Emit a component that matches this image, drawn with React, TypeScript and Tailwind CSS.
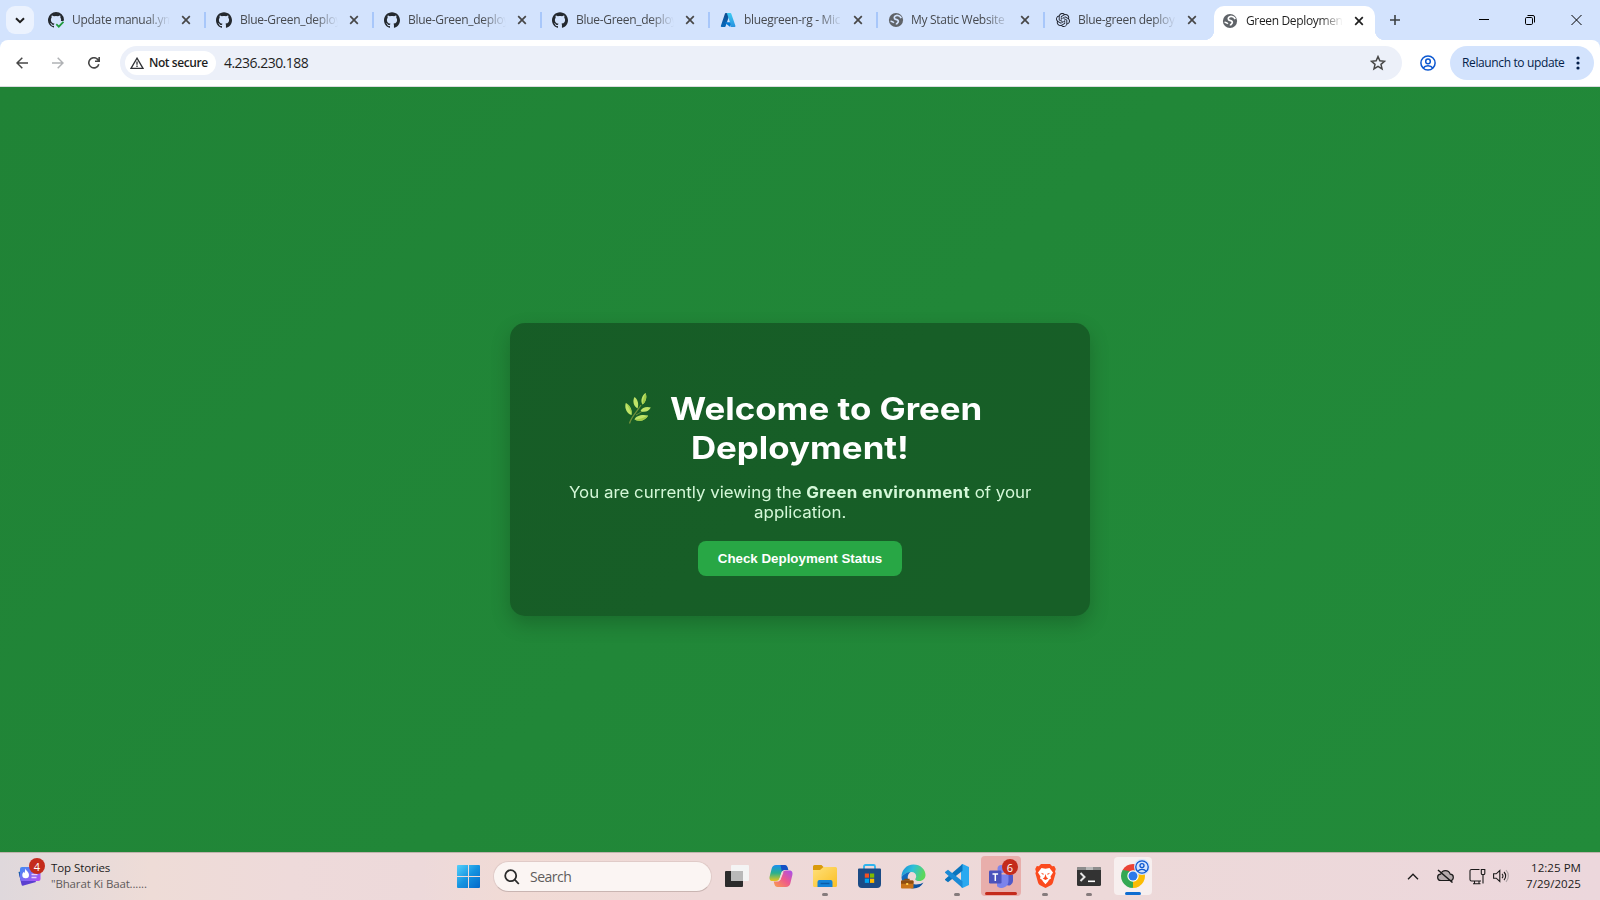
import type { ReactNode } from "react";
import { SiGithub, SiOpenai } from "react-icons/si";

const ui = "font-['Open_Sans','Noto_Sans',sans-serif]";

function CloseX({ color }: { color: string }) {
  return (
    <svg width="10" height="10" viewBox="0 0 10 10" fill="none" stroke={color} strokeWidth="1.7">
      <path d="M1.2 1.2 8.8 8.8M8.8 1.2 1.2 8.8" />
    </svg>
  );
}

function GithubMark() {
  return <SiGithub size={16} color="#24292f" />;
}

function GithubCheck() {
  return (
    <svg width="16" height="16" viewBox="0 0 16 16" fill="none">
      <path
        fill="#24292f"
        d="M8 0a8 8 0 0 0-2.5 15.6c.4.1.5-.2.5-.4v-1.4c-2 .4-2.6-.5-2.7-1-.1-.2-.5-.9-.8-1.1-.3-.2-.7-.5 0-.5.6 0 1.1.6 1.2.8.7 1.2 1.9.9 2.3.7.1-.5.3-.9.5-1.1-1.8-.2-3.6-.9-3.6-4 0-.8.3-1.6.8-2.1-.1-.2-.4-1 .1-2.1 0 0 .7-.2 2.2.8a7.5 7.5 0 0 1 4 0c1.5-1 2.2-.8 2.2-.8.4 1.1.2 1.9.1 2.1.5.6.8 1.3.8 2.1l-.2 1.4H15.4L16 8A8 8 0 0 0 8 0Z"
      />
      <path d="m8.3 12.2 2.500 2.500 4.600-4.900" stroke="#1f9a3d" strokeWidth="1.7" />
    </svg>
  );
}

function AzureMark() {
  return (
    <svg width="16" height="16" viewBox="0 0 16 16">
      <defs>
        <linearGradient id="azL" x1="0" y1="0" x2="0" y2="1">
          <stop offset="0" stopColor="#114a8b" />
          <stop offset="1" stopColor="#0669bc" />
        </linearGradient>
        <linearGradient id="azR" x1="0" y1="0" x2="0" y2="1">
          <stop offset="0" stopColor="#3ccbf4" />
          <stop offset="1" stopColor="#2892df" />
        </linearGradient>
      </defs>
      <path d="M5.8 1h4.3L5.6 14.3a.9.9 0 0 1-.8.6H1.700a.8.8 0 0 1-.8-1.100L5 1.600A.9.9 0 0 1 5.800 1Z" fill="url(#azL)" />
      <path d="M5.100 10.200h6.500l-1.400 4.700-5.300-4.200Z" fill="#0078d4" />
      <path d="M6.200 1h4.200c.4 0 .7.200.8.600l4.200 12.200a.8.8 0 0 1-.8 1.100h-4.300a.9.9 0 0 0 .8-1.100L7 1.600A.9.9 0 0 0 6.200 1Z" fill="url(#azR)" />
    </svg>
  );
}

function Globe({ land }: { land: string }) {
  return (
    <svg className="shrink-0" width="16" height="16" viewBox="0 0 16 16" fill="none">
      <circle cx="8" cy="8" r="7.100" fill="#5f6368" />
      <path
        d="M13.200 6.200C12.200 4 9.600 3 7.700 3.700 5.800 4.400 5.800 7 7.800 7.400c1.800.4 2.800.8 2.500 2.300-.3 1.500-1.500 1.400-2 2.900M2.600 9.200c1 .2 2.300.3 3.300 1.500"
        stroke={land}
        strokeWidth="1.700"
      />
    </svg>
  );
}

type TabProps = { icon: ReactNode; title: string; narrow?: boolean; last?: boolean };

function Tab({ icon, title, narrow, last }: TabProps) {
  return (
    <div
      className={`flex h-[16px] shrink-0 items-center border-r-2 pl-[10px] ${narrow ? "w-[167px]" : "w-[168px]"} ${last ? "border-transparent" : "border-[#a8c7fa]"}`}
    >
      <span className="flex w-[16px] shrink-0 justify-center">{icon}</span>
      <span
        className={`shrink-0 text-[12px] leading-[18px] tracking-[-0.300px] whitespace-nowrap text-[#474a4f] ${narrow ? "ml-[7px]" : "ml-[8px]"} w-[98px] [mask-image:linear-gradient(to_right,black_76%,transparent)]`}
      >
        {title}
      </span>
      <span className="ml-[11px] flex">
        <CloseX color="#474747" />
      </span>
    </div>
  );
}

function TabStrip() {
  return (
    <div className="flex h-[40px] items-start bg-[#d3e3fd]">
      <div className="mt-[6px] ml-[6px] flex size-[28px] shrink-0 items-center justify-center rounded-[9px] bg-[#ebf2fe]">
        <svg width="10" height="7" viewBox="0 0 10 7" fill="none" stroke="#1f1f1f" strokeWidth="2">
          <path d="M1 1.200 5 5.200 9 1.200" />
        </svg>
      </div>
      <div className="mt-[12px] mr-[2px] ml-[4px] flex shrink-0">
        <Tab icon={<GithubCheck />} title="Update manual.ym" />
        <Tab icon={<GithubMark />} title="Blue-Green_deploy" />
        <Tab icon={<GithubMark />} title="Blue-Green_deploy" />
        <Tab icon={<GithubMark />} title="Blue-Green_deploy" />
        <Tab icon={<AzureMark />} title="bluegreen-rg - Mic" />
        <Tab icon={<Globe land="#d3e3fd" />} title="My Static Website" narrow />
        <Tab icon={<SiOpenai size={14} color="#1b1f2a" />} title="Blue-green deploy" narrow last />
      </div>
      <div className="mt-[30px] -ml-[10px] size-[10px] shrink-0 bg-[radial-gradient(circle_at_0_0,#d3e3fd_10px,white_10.5px)]" />
      <div className="mt-[6px] flex h-[34px] w-[161px] shrink-0 items-center rounded-t-[10px] bg-white pb-[5px] pl-[8px]">
        <Globe land="#ffffff" />
        <span className="ml-[8px] w-[97px] shrink-0 text-[12px] leading-[18px] tracking-[-0.350px] whitespace-nowrap text-[#1f1f1f] [mask-image:linear-gradient(to_right,black_76%,transparent)]">
          Green Deploymen
        </span>
        <span className="ml-[11px] flex">
          <CloseX color="#1f1f1f" />
        </span>
      </div>
      <div className="mt-[30px] size-[10px] shrink-0 bg-[radial-gradient(circle_at_100%_0,#d3e3fd_10px,white_10.5px)]" />
      <svg className="mt-[15px] ml-[5px] shrink-0" width="10" height="10" viewBox="0 0 10 10" stroke="#3c4043" strokeWidth="1.600">
        <path d="M5 0v10M0 5h10" />
      </svg>
      <div className="mt-[14px] mr-[18px] ml-auto flex shrink-0 items-center gap-[36px] text-black">
        <svg width="10" height="12" viewBox="0 0 10 12" stroke="currentColor">
          <path d="M0 5.500h10" />
        </svg>
        <svg width="10" height="12" viewBox="0 0 10 12" stroke="currentColor" fill="none">
          <rect x=".5" y="3.500" width="7" height="7" rx="1.200" />
          <path d="M2.500 1.500H8A1.500 1.500 0 0 1 9.500 3v5.500" />
        </svg>
        <svg width="11" height="12" viewBox="0 0 11 12" stroke="currentColor">
          <path d="m.5 1 10 10M10.500 1 .5 11" />
        </svg>
      </div>
    </div>
  );
}

function PersonCircle({ size, color }: { size: number; color: string }) {
  return (
    <svg width={size} height={size} viewBox="0 0 16 16" fill="none" stroke={color} strokeWidth="1.500">
      <circle cx="8" cy="8" r="7.100" />
      <circle cx="8" cy="6.400" r="2.300" />
      <path d="M3.300 13c1-1.600 2.600-2.300 4.700-2.300s3.700.7 4.700 2.300" />
    </svg>
  );
}

function Toolbar() {
  return (
    <div className="bg-[#d3e3fd]">
      <div className="flex h-[47px] items-center rounded-t-[8px] border-b border-[#dadce0] bg-white pr-[6px] pl-[16px]">
        <svg width="12" height="12" viewBox="0 0 12 12" fill="none" stroke="#474747" strokeWidth="1.500">
          <path d="M12 6H1M6.300.7 1 6l5.300 5.300" />
        </svg>
        <svg className="ml-[24px]" width="12" height="12" viewBox="0 0 12 12" fill="none" stroke="#b0b2b5" strokeWidth="1.500">
          <path d="M0 6h11M5.700.7 11 6l-5.300 5.300" />
        </svg>
        <svg className="ml-[24px]" width="12" height="12" viewBox="0 0 12 12" fill="none" stroke="#474747" strokeWidth="1.600">
          <path d="M10.800 7.200A5.100 5.100 0 1 1 9.700 2.400L11 3.800M11.200 0v4.200H7" />
        </svg>
        <div className="ml-[20px] flex h-[34px] w-[1282px] items-center rounded-full bg-[#ecf0f9] pl-[5px]">
          <div className="flex h-[24px] w-[91px] items-center rounded-full bg-white pl-[5px]">
            <svg width="14" height="12" viewBox="0 0 14 12" fill="none" stroke="#303236" strokeWidth="1.300">
              <path d="M7 1.200 13 11.300H1Z" />
              <path d="M7 4.500v3.200M7 8.600v1.300" />
            </svg>
            <span className="ml-[5px] text-[12px] leading-[18px] font-semibold tracking-[-0.430px] whitespace-nowrap text-[#1f1f1f]">
              Not secure
            </span>
          </div>
          <span className="ml-[8px] text-[14px] leading-[20px] tracking-[-0.530px] text-[#1f1f1f]">4.236.230.188</span>
          <svg className="mr-[16px] ml-auto" width="16" height="16" viewBox="0 0 15 15" fill="none" stroke="#474747" strokeWidth="1.400">
            <path d="m7.500 1.500 1.750 4 4.300.4-3.250 2.850 1 4.250L7.500 10.750 3.700 13l1-4.250L1.450 5.900l4.300-.4Z" />
          </svg>
        </div>
        <span className="ml-[18px] flex">
          <PersonCircle size={16} color="#0b57d0" />
        </span>
        <div className="ml-auto flex h-[34px] w-[144px] items-center rounded-full bg-[#d3e3fd] pl-[12px] text-[#041e49]">
          <span className="w-[103px] text-[12px] leading-[18px] tracking-[-0.370px] whitespace-nowrap">Relaunch to update</span>
          <svg className="ml-[11px]" width="4" height="14" viewBox="0 0 4 14" fill="currentColor">
            <circle cx="2" cy="2" r="1.600" />
            <circle cx="2" cy="7" r="1.600" />
            <circle cx="2" cy="12" r="1.600" />
          </svg>
        </div>
      </div>
    </div>
  );
}

function Herb() {
  return (
    <svg width="26" height="31" viewBox="0 0 26 31">
      <path d="M4.500 30.500C6 24 12 19 16 12" stroke="#6f8f3c" strokeWidth="1.300" fill="none" />
      <path d="M11 22c4-2 6-4 9-5" stroke="#6f8f3c" strokeWidth="1" fill="none" />
      <g fill="#bfe468">
        <path d="M17.500 11.500C15 8 17 2.500 20.500 0c1.800 4 .5 9-3 11.500Z" />
        <path d="M12.500 15.500C9 13.500 7 8.500 9.500 4c3.500 2.500 4.500 7.500 3 11.500Z" />
        <path d="M6.500 22C1.500 20.500-.8 14.500.8 10c4 2 6.700 7 5.700 12Z" />
        <path d="M15.500 18c1.500-3.500 6-5 10.300-3.500-1.800 3.800-6.300 5.500-10.300 3.500Z" />
        <path d="M9.500 26.500C11 22.500 17 21 23 22.500c-2 4.800-8.500 6.700-13.500 4Z" />
      </g>
      <g fill="#9fcb48">
        <path d="M17.500 11.500C17.500 8 19 3.500 20.500 0c1.800 4 .5 9-3 11.500Z" />
        <path d="M6.500 22C5.500 17 3.500 14 .8 10c4 2 6.700 7 5.700 12Z" />
        <path d="M9.500 26.500c4 0 9-1.500 13.500-4-2 4.800-8.500 6.700-13.500 4Z" />
      </g>
    </svg>
  );
}

function Page() {
  return (
    <main className="flex h-[765px] items-center justify-center bg-[linear-gradient(135deg,#208336,#228b3a)] font-['Inter',sans-serif]">
      <div className="flex h-[293px] w-[580px] flex-col items-center rounded-[15px] bg-black/30 pt-[66px] shadow-[0_8px_20px_rgba(0,0,0,0.2)]">
        <h1 className="flex flex-col items-center text-[31px] leading-[39px] font-bold whitespace-nowrap text-white">
          <span className="flex h-[39px] w-[362px] items-center pl-[6px]">
            <Herb />
            <span className="ml-[19px] origin-left scale-x-[1.125]">Welcome to Green</span>
          </span>
          <span className="h-[39px] origin-center scale-x-[1.125]">Deployment!</span>
        </h1>
        <p className="mt-[16px] flex scale-x-[1.055] flex-col items-center text-[16px] leading-[19.500px] whitespace-nowrap text-[#d4f8d8]">
          <span>
            You are currently viewing the <strong className="font-bold tracking-[0.300px]">Green environment</strong> of your
          </span>
          <span>application.</span>
        </p>
        <button className="mt-[19px] h-[35px] w-[204px] rounded-[8px] bg-[#28a745] font-['Liberation_Sans',Arial,sans-serif] text-[13.330px] font-bold whitespace-nowrap text-white">
          Check Deployment Status
        </button>
      </div>
    </main>
  );
}

function WidgetIcon() {
  return (
    <svg width="23" height="22" viewBox="0 0 23 22">
      <defs>
        <linearGradient id="wg" x1="0" y1="0" x2="1" y2="1">
          <stop offset="0" stopColor="#3f8cf3" />
          <stop offset="1" stopColor="#b44df5" />
        </linearGradient>
      </defs>
      <path d="m1 9 2.500 10.500a1.500 1.500 0 0 0 2 1L18 17l-4-9Z" fill="#5b3fd0" />
      <path d="m.5 7 2 8 4-1-2-8Z" fill="#1b5fae" />
      <rect x="2" y="2" width="20.500" height="14" rx="2" fill="url(#wg)" />
      <path d="M7.500 3.500c.5 2.500 3.500 3.500 3.500 6.500A3.300 3.300 0 0 1 7.500 13.300 3.300 3.300 0 0 1 4.300 10c0-1.500.8-2.500 1.300-3l1 1C7 6.500 7 5 7.500 3.500Z" fill="#fff" />
      <path d="M13.500 9.500h6M13.500 12.500h5" stroke="#e6ccff" strokeWidth="1.300" />
    </svg>
  );
}

function StartIcon() {
  return (
    <svg width="23" height="23" viewBox="0 0 23 23">
      <defs>
        <linearGradient id="st" x1="0" y1="0" x2="23" y2="23" gradientUnits="userSpaceOnUse">
          <stop offset="0" stopColor="#54d0fb" />
          <stop offset=".5" stopColor="#1593e0" />
          <stop offset="1" stopColor="#0568c9" />
        </linearGradient>
      </defs>
      <path fill="url(#st)" d="M1 0h10v11H0V1a1 1 0 0 1 1-1ZM12 0h10a1 1 0 0 1 1 1v10H12ZM0 12h11v11H1a1 1 0 0 1-1-1ZM12 12h11v10a1 1 0 0 1-1 1H12Z" />
    </svg>
  );
}

function TaskViewIcon() {
  return (
    <svg width="24" height="22" viewBox="0 0 24 22">
      <rect x="0" y="6" width="18" height="16" rx="1" fill="#2b2b2b" />
      <rect x="6" y="0" width="18" height="16" rx="1" fill="#f4f4f4" />
      <rect x="6" y="6" width="12" height="10" fill="#b9b9b9" />
    </svg>
  );
}

function CopilotIcon() {
  return (
    <svg width="24" height="22" viewBox="0 0 24 22">
      <defs>
        <linearGradient id="cpA" x1="0" y1="0" x2="0" y2="1">
          <stop offset="0" stopColor="#1b8ff0" />
          <stop offset=".5" stopColor="#28b08e" />
          <stop offset="1" stopColor="#e8c51c" />
        </linearGradient>
        <linearGradient id="cpB" x1="1" y1="0" x2="0" y2="1">
          <stop offset="0" stopColor="#a44ff0" />
          <stop offset=".5" stopColor="#ef5a8a" />
          <stop offset="1" stopColor="#f9a04c" />
        </linearGradient>
      </defs>
      <path d="M7 0h8.500c1.800 0 2.500 1 3 2.500L19.300 5H16c-2 0-3 .8-3.600 2.800L10.700 13c-.6 2-1.700 3-3.700 3H3.500C.8 16 0 13.800.7 11.200l2-7.700C3.300 1.200 4.700 0 7 0Z" fill="url(#cpA)" />
      <path d="M11.500 0h4c1.800 0 2.500 1 3 2.500L19.300 5H16c-1.500 0-2.500.4-3.200 1.500Z" fill="#1650c4" />
      <path d="M17 22H8.500c-1.800 0-2.500-1-3-2.500L4.700 16.500H8c2 0 3-.8 3.600-2.800L13.300 8.500c.6-2 1.700-3 3.700-3h3.500c2.700 0 3.500 2.200 2.800 4.800l-2 8.200C20.700 20.800 19.300 22 17 22Z" fill="url(#cpB)" />
      <path d="m12.600 7.500 1.900-.3L11.400 15l-2.200.6c.8-.5 1.200-1.300 1.500-2.300Z" fill="#eedada" />
    </svg>
  );
}

function FolderIcon() {
  return (
    <svg width="24" height="22" viewBox="0 0 24 22">
      <defs>
        <linearGradient id="fo" x1="0" y1="0" x2="1" y2="1">
          <stop offset="0" stopColor="#ffe07a" />
          <stop offset="1" stopColor="#fbbf24" />
        </linearGradient>
      </defs>
      <path d="M0 1.500A1.500 1.500 0 0 1 1.500 0h7L11 2.500V6H0Z" fill="#d99a0b" />
      <path d="M0 5h7l3.500-3H22.500A1.500 1.500 0 0 1 24 3.500v17a1.500 1.500 0 0 1-1.500 1.500h-21A1.500 1.500 0 0 1 0 20.500Z" fill="url(#fo)" />
      <path d="M4.500 22v-5A2 2 0 0 1 6.500 15h11a2 2 0 0 1 2 2v5Z" fill="#1483d8" />
      <path d="M7.500 18.500h9" stroke="#0a5ca8" strokeWidth="1.500" />
    </svg>
  );
}

function StoreIcon() {
  return (
    <svg width="23" height="24" viewBox="0 0 23 24">
      <path d="M6 6V2.500A1.500 1.500 0 0 1 7.500 1h8A1.500 1.500 0 0 1 17 2.500V6" fill="none" stroke="#2fb4ee" strokeWidth="1.800" />
      <path d="M0 5.500A1 1 0 0 1 1 4.500h21a1 1 0 0 1 1 1V20a4 4 0 0 1-4 4H4a4 4 0 0 1-4-4Z" fill="#1b4b85" />
      <path d="M6.800 9.500h4.200v4.200H6.800Z" fill="#f25022" />
      <path d="M12 9.500h4.200v4.200H12Z" fill="#7fba00" />
      <path d="M6.800 14.700h4.200v4.200H6.800Z" fill="#00a4ef" />
      <path d="M12 14.700h4.200v4.200H12Z" fill="#ffb900" />
    </svg>
  );
}

function EdgeIcon() {
  return (
    <svg width="25" height="25" viewBox="0 0 25 25">
      <defs>
        <linearGradient id="edA" x1="0" y1="0" x2="1" y2=".3">
          <stop offset="0" stopColor="#1b8ad8" />
          <stop offset=".5" stopColor="#2fc0d8" />
          <stop offset="1" stopColor="#5bd75b" />
        </linearGradient>
        <linearGradient id="edB" x1="0" y1="0" x2="1" y2="1">
          <stop offset="0" stopColor="#1372c8" />
          <stop offset="1" stopColor="#0c4a94" />
        </linearGradient>
      </defs>
      <path d="M.5 13C.5 6 5.500.5 12.500.5c7 0 12 5 12 10.500 0 3.600-2.800 6-6 6-2.500 0-4.300-.8-4.300-1.800 0-.8 1-1.200 1-3 0-2.200-2-4.200-4.700-4.200C6 8 2.500 10 .5 13Z" fill="url(#edA)" />
      <path d="M.5 13C2.500 10 6 8 9.500 8c-2 1.500-2.800 3.500-2.800 5.500 0 4 4 7 8.300 7 3 0 5.500-1 7.500-2A12 12 0 0 1 12.500 24.500C6 24.500.5 19.500.5 13Z" fill="url(#edB)" />
      <path d="M4 17v-1.500h4V17" fill="none" stroke="#8a4b10" strokeWidth="1.300" />
      <rect x="0" y="16.500" width="12.500" height="8" rx="1" fill="#c9741a" />
      <path d="M0 17.500a1 1 0 0 1 1-1h10.500a1 1 0 0 1 1 1v2.300H0Z" fill="#8f4d12" />
      <rect x="5.200" y="19" width="2" height="2" fill="#ffd04a" />
    </svg>
  );
}

function VsCodeIcon() {
  return (
    <svg width="24" height="24" viewBox="0 0 24 24">
      <path d="M17.500 0 24 3v18l-6.500 3-1.500-1V1Z" fill="#2aa9f0" />
      <path d="M17.500 0v6.800L3 18.300 0 16v-.8Z" fill="#0a74bd" />
      <path d="M17.500 24v-6.800L3 5.700 0 8v.8Z" fill="#1a8ad6" />
    </svg>
  );
}

function TeamsIcon() {
  return (
    <svg width="24" height="23" viewBox="0 0 24 23">
      <circle cx="20" cy="6" r="3" fill="#5059c9" />
      <circle cx="12.500" cy="4" r="4" fill="#7b83eb" />
      <path d="M17 9.500h6a1 1 0 0 1 1 1v5.500a4.500 4.500 0 0 1-7 3.700Z" fill="#5059c9" />
      <path d="M8 9.500h10.500a1 1 0 0 1 1 1V16a7 7 0 0 1-11.500 5.300Z" fill="#7b83eb" />
      <rect x="0" y="5.500" width="12.500" height="13" rx="1.200" fill="#4b53bc" />
      <path d="M3.500 9h5.600M6.300 9v7" stroke="#fff" strokeWidth="1.500" />
    </svg>
  );
}

function BraveIcon() {
  return (
    <svg width="21" height="24" viewBox="0 0 21 24">
      <path d="M6 0h9l2.200 2.300 2-.3L20.800 5 20 7.500l.6 1.700-2.700 9.600c-.3 1-.8 1.600-1.600 2.100L10.500 24l-5.800-3.100c-.8-.5-1.300-1.100-1.600-2.100L.4 9.200 1 7.500.2 5 1.800 2l2 .3Z" fill="#fb4a1e" />
      <path d="m6.500 4 4 .8 4-.8 3.500 4.500-2.500 4 .5 2-2 1.200-1 1.800-2.500 2.800L8 17.500l-1-1.800-2-1.200.5-2L3 8.500Z" fill="#fff" />
      <path d="m5.800 8.700 3 1-.6 1.300ZM15.200 8.700l-3 1 .6 1.300ZM10.500 10l1 3.300 1.700 1.200-2.700 1.500-2.700-1.500 1.700-1.200Z" fill="#fb4a1e" />
    </svg>
  );
}

function TerminalIcon() {
  return (
    <svg width="24" height="19" viewBox="0 0 24 19">
      <rect width="24" height="19" rx="1.500" fill="#333" />
      <path d="M0 3V1.500A1.500 1.500 0 0 1 1.500 0h21A1.500 1.500 0 0 1 24 1.500V3Z" fill="#8c8c8c" />
      <path d="M9 0h7v3H9Z" fill="#b9b9b9" />
      <path d="m3.500 6 4 4-4 4" fill="none" stroke="#e6e6e6" strokeWidth="2" />
      <path d="M11 14.300h7" stroke="#fff" strokeWidth="1.600" />
    </svg>
  );
}

function ChromeIcon() {
  return (
    <svg width="24" height="24" viewBox="0 0 24 24">
      <path d="M12 12 1.610 6A12 12 0 0 1 22.390 6Z" fill="#ea4335" />
      <path d="M12 12 22.390 6A12 12 0 0 1 12 24Z" fill="#fbbc04" />
      <path d="M12 12 12 24A12 12 0 0 1 1.610 6Z" fill="#34a853" />
      <path d="M12 6.500h10.700L17 15l-5 9h-.5l5-9.500Z" fill="#fbbc04" />
      <path d="M1.610 6 7.200 14.700l4.800-2.700-4-5Z" fill="#34a853" />
      <circle cx="12" cy="12" r="5.700" fill="#fff" />
      <circle cx="12" cy="12" r="4.500" fill="#2b79ea" />
    </svg>
  );
}

function TaskSlot({ children, running }: { children: ReactNode; running?: boolean }) {
  return (
    <div className="relative flex h-[48px] w-[44px] shrink-0 items-center justify-center">
      {children}
      {running && <span className="absolute bottom-[4px] h-[3px] w-[6px] rounded-full bg-[#857b7c]" />}
    </div>
  );
}

function Taskbar() {
  return (
    <footer className="flex h-[48px] bg-[linear-gradient(to_right,#dfd8dc_0px,#eedcd7_150px,#eedada_290px,#edd9da_420px,#f1dbd5_520px,#eed9d8_700px,#edd9d9_1100px,#ecd7dc_1600px)] shadow-[inset_0_1px_0_#bfb3ad]">
      <div className="flex w-[446px] shrink-0 pl-[18px]">
        <div className="relative flex h-[48px] w-[33px] items-start pt-[13px]">
          <WidgetIcon />
          <span className="absolute top-[6px] left-[11px] flex size-[16px] items-center justify-center rounded-full bg-[#c42b1c] text-[11px] leading-none text-white">
            4
          </span>
        </div>
        <div className="flex flex-col pt-[8px] text-[11.500px] leading-[16px] whitespace-nowrap">
          <span className="tracking-[-0.080px] text-[#1b1a1a]">Top Stories</span>
          <span className="tracking-[-0.150px] text-[#5f5a5b]">"Bharat Ki Baat......</span>
        </div>
      </div>
      <TaskSlot>
        <StartIcon />
      </TaskSlot>
      <div className="mt-[9px] mr-[3px] ml-[3px] flex h-[31px] w-[219px] shrink-0 items-center rounded-full border border-[#e0cbc8] border-b-[#c9b5b2] bg-[#fbf5f3] pl-[10px]">
        <svg width="16" height="16" viewBox="0 0 16 16" fill="none" stroke="#2b2b2b" strokeWidth="1.800">
          <circle cx="6.700" cy="6.700" r="5.500" />
          <path d="m10.700 10.700 4.100 4.300" />
        </svg>
        <span className="ml-[10px] text-[14px] leading-[20px] tracking-[-0.500px] text-[#605c5b]">Search</span>
      </div>
      <TaskSlot>
        <TaskViewIcon />
      </TaskSlot>
      <TaskSlot>
        <CopilotIcon />
      </TaskSlot>
      <TaskSlot running>
        <FolderIcon />
      </TaskSlot>
      <TaskSlot>
        <StoreIcon />
      </TaskSlot>
      <TaskSlot>
        <EdgeIcon />
      </TaskSlot>
      <TaskSlot running>
        <VsCodeIcon />
      </TaskSlot>
      <TaskSlot>
        <div className="relative flex size-[40px] items-center justify-center rounded-[4px] bg-[#e8aeab]">
          <TeamsIcon />
          <span className="absolute top-[3px] right-[3px] flex size-[16px] items-center justify-center rounded-full bg-[#c42b1c] text-[11px] leading-none text-white">
            6
          </span>
          <span className="absolute bottom-px h-[3px] w-[32px] rounded-full bg-[#c42b1c]" />
        </div>
      </TaskSlot>
      <TaskSlot running>
        <BraveIcon />
      </TaskSlot>
      <TaskSlot running>
        <TerminalIcon />
      </TaskSlot>
      <TaskSlot>
        <div className="relative flex size-[38px] items-center justify-center rounded-[4px] bg-[#f7efef]">
          <ChromeIcon />
          <span className="absolute top-[2px] right-[2px] flex size-[16px] items-center justify-center rounded-full bg-[#d3e3fd]">
            <PersonCircle size={14} color="#0b57d0" />
          </span>
          <span className="absolute bottom-0 h-[3px] w-[16px] rounded-full bg-[#0f6cd0]" />
        </div>
      </TaskSlot>
      <div className="mr-[19px] ml-auto flex items-center text-[#1b1a1a]">
        <svg width="12" height="7" viewBox="0 0 12 7" fill="none" stroke="currentColor" strokeWidth="1.300">
          <path d="M1 6.200 6 1.200l5 5" />
        </svg>
        <svg className="ml-[18px]" width="17" height="14" viewBox="0 0 17 14" fill="none" stroke="currentColor" strokeWidth="1.200">
          <path d="M4 11.500a3.200 3.200 0 0 1-.3-6.400 5 5 0 0 1 9.500 0 3.200 3.200 0 0 1-.2 6.400Z" fill="#b5aaac" />
          <path d="M1 1 15.500 13.500" strokeWidth="1.500" />
        </svg>
        <svg className="ml-[15px]" width="17" height="17" viewBox="0 0 17 17" fill="none" stroke="currentColor" strokeWidth="1.100">
          <path d="M10.500 1.500h-8A1.500 1.500 0 0 0 1 3v8.500A1.500 1.500 0 0 0 2.500 13H12M4 15.800h7.500M5.500 13v2.800M10 13v2.800" />
          <path d="M12.300 1.500h3.500v4a1 1 0 0 1-1 1h-1.500a1 1 0 0 1-1-1ZM14 6.500v9" />
        </svg>
        <svg className="ml-[7px]" width="16" height="14" viewBox="0 0 16 14" fill="none" stroke="currentColor" strokeWidth="1.100">
          <path d="M.6 4.800h2.600L6.800 1.500v11L3.200 9.200H.6Z" />
          <path d="M9 4.800a3 3 0 0 1 0 4.400M11 3a5.700 5.700 0 0 1 0 8" />
          <path d="M13 1.200a8.300 8.300 0 0 1 0 11.600" stroke="#a99fa1" />
        </svg>
        <div className="ml-[17px] flex flex-col items-end text-[11.500px] leading-[16px] tracking-[0.050px] whitespace-nowrap">
          <span>12:25 PM</span>
          <span>7/29/2025</span>
        </div>
      </div>
    </footer>
  );
}

export default function App() {
  return (
    <div className={`flex h-[900px] w-[1600px] flex-col overflow-hidden ${ui}`}>
      <TabStrip />
      <Toolbar />
      <Page />
      <Taskbar />
    </div>
  );
}
